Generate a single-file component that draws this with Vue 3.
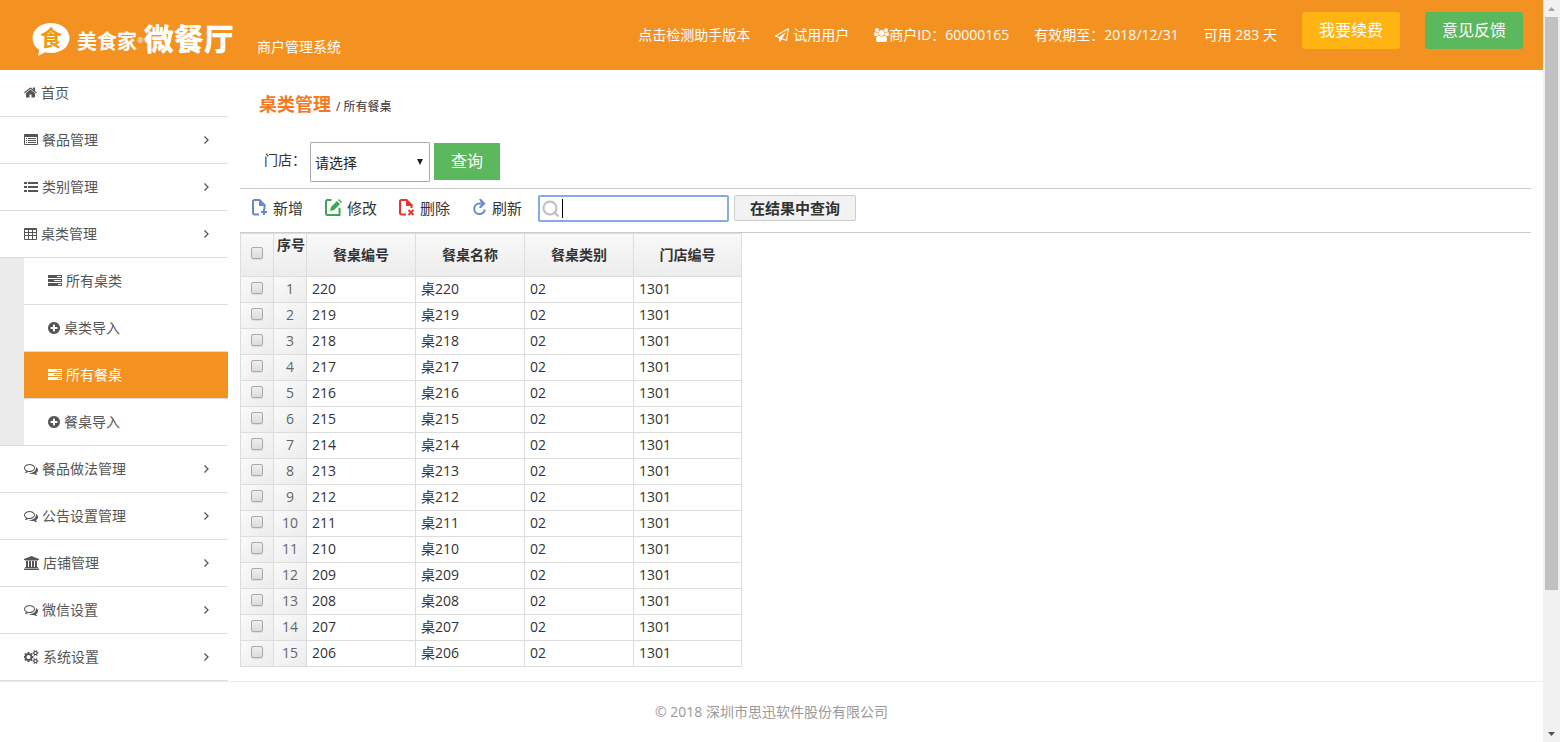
<script setup>
import { ref } from 'vue'

const icons = {
  home: { w: 13, box: '64 128 1664 1664', d: 'M1472 992v480q0 26-19 45t-45 19h-384v-384h-256v384h-384q-26 0-45-19t-19-45v-480q0-1 .5-3t.5-3l575-474 575 474q1 2 1 6zm223-69l-62 74q-8 9-21 11h-3q-13 0-21-7l-692-577-692 577q-12 8-24 7-13-2-21-11l-62-74q-8-10-7-23.5t11-21.5l719-599q32-26 76-26t76 26l244 204v-195q0-14 9-23t23-9h192q14 0 23 9t9 23v408l219 182q10 8 11 21.5t-7 23.5z' },
  listAlt: { w: 14, box: '0 0 14 14', d: 'M1 1h12a1 1 0 0 1 1 1v9a1 1 0 0 1-1 1H1a1 1 0 0 1-1-1V2a1 1 0 0 1 1-1zM1 4v7h12V4zM2 5h1v1H2zM4 5h8v1H4zM2 7h1v1H2zM4 7h8v1H4zM2 9h1v1H2zM4 9h8v1H4z' },
  list: { w: 14, box: '0 0 14 14', d: 'M0 2h3v2H0zM4 2h10v2H4zM0 6h3v2H0zM4 6h10v2H4zM0 10h3v2H0zM4 10h10v2H4z' },
  table: { w: 13, box: '0 0 13 14', d: 'M1 1h11a1 1 0 0 1 1 1v10a1 1 0 0 1-1 1H1a1 1 0 0 1-1-1V2a1 1 0 0 1 1-1zM1 3v2h3V3zM5 3v2h3V3zM9 3v2h3V3zM1 6v2h3V6zM5 6v2h3V6zM9 6v2h3V6zM1 9v3h3V9zM5 9v3h3V9zM9 9v3h3V9z' },
  tasks: { w: 14, box: '0 0 14 14', d: 'M0 1h14v3H0zM9 2v1h4V2zM0 5h14v3H0zM6 6v1h7V6zM0 9h14v3H0zM10 10v1h3v-1z' },
  plus: { w: 12, box: '128 128 1536 1536', d: 'M1344 960v-128q0-26-19-45t-45-19h-256v-256q0-26-19-45t-45-19h-128q-26 0-45 19t-19 45v256h-256q-26 0-45 19t-19 45v128q0 26 19 45t45 19h256v256q0 26 19 45t45 19h128q26 0 45-19t19-45v-256h256q26 0 45-19t19-45zm320-64q0 209-103 385.5t-279.5 279.5-385.5 103-385.5-103-279.5-279.5-103-385.5 103-385.5 279.5-279.5 385.5-103 385.5 103 279.5 279.5 103 385.5z' },
  comments: { w: 14, box: '0 0 1792 1792', d: 'M704 384q-153 0-286 52t-211.5 141-78.5 191q0 82 53 158t149 132l97 56-35 84q34-20 62-39l44-31 53 10q78 14 153 14 153 0 286-52t211.5-141 78.5-191-78.5-191-211.5-141-286-52zm0-128q191 0 353.5 68.5t256.5 186.5 94 257-94 257-256.5 186.5-353.5 68.5q-86 0-176-16-124 88-278 128-36 9-86 16h-3q-11 0-20.5-8t-11.5-21q-1-3-1-6.5t.5-6.5 2-6l2.5-5 3.5-5.5 4-5 4.5-5 4-4.5q5-6 23-25t26-29.5 22.5-29 25-38.5 20.5-44q-124-72-195-177t-71-224q0-139 94-257t256.5-186.5 353.5-68.5zm822 1169q10 24 20.5 44t25 38.5 22.5 29 26 29.5 23 25q1 1 4 4.5t4.5 5 4 5 3.5 5.5l2.5 5 2 6 .5 6.5-1 6.5q-3 14-13 22t-22 7q-50-7-86-16-154-40-278-128-90 16-176 16-271 0-472-132 58 4 88 4 161 0 309-45t264-129q125-92 192-212t67-254q0-77-23-152 129 71 204 178t75 230q0 120-71 224.5t-195 176.5z' },
  bank: { w: 15, box: '0 0 1920 1792', d: 'M960 0l960 384v128h-128q0 26-20.5 45t-48.5 19h-1526q-28 0-48.5-19t-20.5-45h-128v-128zm-704 640h256v768h128v-768h256v768h128v-768h256v768h128v-768h256v768h59q28 0 48.5 19t20.5 45v64h-1664v-64q0-26 20.5-45t48.5-19h59v-768zm1595 960q28 0 48.5 19t20.5 45v128h-1920v-128q0-26 20.5-45t48.5-19h1782z' },
  cogs: { w: 15, box: '0 0 1920 1792', d: 'M832 896q0-106-75-181t-181-75-181 75-75 181 75 181 181 75 181-75 75-181zm768 512q0-52-38-90t-90-38-90 38-38 90q0 53 37.5 90.5t90.5 37.5 90.5-37.5 37.5-90.5zm0-1024q0-52-38-90t-90-38-90 38-38 90q0 53 37.5 90.5t90.5 37.5 90.5-37.5 37.5-90.5zm-384 421v185q0 10-7 19.5t-16 10.5l-155 24q-11 35-32 76 34 48 90 115 7 11 7 20 0 12-7 19-23 30-82.5 89.5t-78.5 59.5q-11 0-21-7l-115-90q-37 19-77 31-11 108-23 155-7 24-30 24h-186q-11 0-20-7.5t-10-17.5l-23-153q-34-10-75-31l-118 89q-7 7-20 7-11 0-21-8-144-133-144-160 0-9 7-19 10-14 41-53t47-61q-23-44-35-82l-152-24q-10-1-17-9.5t-7-19.5v-185q0-10 7-19.5t16-10.5l155-24q11-35 32-76-34-48-90-115-7-11-7-20 0-12 7-20 22-30 82-89t79-59q11 0 21 7l115 90q34-18 77-32 11-108 23-154 7-24 30-24h186q11 0 20 7.5t10 17.5l23 153q34 10 75 31l118-89q8-7 20-7 11 0 21 8 144 133 144 160 0 8-7 19-12 16-42 54t-45 60q23 48 34 82l152 23q10 2 17 10.5t7 19.5zm640 533v140q0 16-149 31-12 27-30 52 51 113 51 138 0 4-4 7-122 71-124 71-8 0-46-47t-52-68q-20 2-30 2t-30-2q-14 21-52 68t-46 47q-2 0-124-71-4-3-4-7 0-25 51-138-18-25-30-52-149-15-149-31v-140q0-16 149-31 13-29 30-52-51-113-51-138 0-4 4-7 4-2 35-20t59-34 30-16q8 0 46 46.5t52 67.5q20-2 30-2t30 2q51-71 92-112l6-2q4 0 124 70 4 3 4 7 0 25-51 138 17 23 30 52 149 15 149 31zm0-1024v140q0 16-149 31-12 27-30 52 51 113 51 138 0 4-4 7-122 71-124 71-8 0-46-47t-52-68q-20 2-30 2t-30-2q-14 21-52 68t-46 47q-2 0-124-71-4-3-4-7 0-25 51-138-18-25-30-52-149-15-149-31v-140q0-16 149-31 13-29 30-52-51-113-51-138 0-4 4-7 4-2 35-20t59-34 30-16q8 0 46 46.5t52 67.5q20-2 30-2t30 2q51-71 92-112l6-2q4 0 124 70 4 3 4 7 0 25-51 138 17 23 30 52 149 15 149 31z' }
}

const menu = [
  { label: '首页', icon: 'home' },
  { label: '餐品管理', icon: 'listAlt', more: true },
  { label: '类别管理', icon: 'list', more: true },
  {
    label: '桌类管理', icon: 'table', more: true,
    children: [
      { label: '所有桌类', icon: 'tasks' },
      { label: '桌类导入', icon: 'plus' },
      { label: '所有餐桌', icon: 'tasks', active: true },
      { label: '餐桌导入', icon: 'plus' }
    ]
  },
  { label: '餐品做法管理', icon: 'comments', more: true },
  { label: '公告设置管理', icon: 'comments', more: true },
  { label: '店铺管理', icon: 'bank', more: true },
  { label: '微信设置', icon: 'comments', more: true },
  { label: '系统设置', icon: 'cogs', more: true }
]

const rows = Array.from({ length: 15 }, (_, i) => ({
  index: i + 1,
  code: String(220 - i),
  name: '桌' + (220 - i),
  type: '02',
  shop: '1301'
}))

const shop = ref('')
const keyword = ref('')
</script>

<template>
  <div class="window">
    <div class="page">
      <header class="top">
        <div class="logo">
          <div class="bubble">
            <svg width="38" height="34" viewBox="0 0 38 34" aria-hidden="true"><path fill="#fff" d="M19 0C29.500 0 37.500 6.500 37.500 15S29.500 30 19 30c-2 0-4-.2-5.800-.7L6 33l1.300-6.300C3 24 .5 20 .5 15 .5 6.500 8.500 0 19 0z" /></svg>
            <span class="bubble-text">食</span>
          </div>
          <span class="brand">美食家</span><span class="reg">®</span><strong class="product">微餐厅</strong>
        </div>
        <span class="system">商户管理系统</span>
        <nav class="top-nav">
          <a href="#" class="top-item">点击检测助手版本</a>
          <a href="#" class="top-item spaced">
            <svg width="14" height="14" viewBox="0 0 1792 1792" fill="currentColor" aria-hidden="true"><path d="M1764 11q33 24 27 64l-256 1536q-5 29-32 45-14 8-31 8-11 0-24-5l-527-215-298 327q-18 21-47 21-14 0-23-4-19-7-30-23.500t-11-36.500v-452l-472-193q-37-14-40-55-3-39 32-59l1664-960q35-21 68 2zm-342 1499l221-1323-1434 827 336 137 863-639-478 797z" /></svg>试用用户
          </a>
          <span class="top-item">
            <svg width="15" height="14" viewBox="0 0 1920 1792" fill="currentColor" aria-hidden="true"><path d="M593 896q-162 5-265 128h-134q-82 0-138-40.500t-56-118.500q0-353 124-353 6 0 43.500 21t97.500 42.500 119 21.500q67 0 133-23-5 37-5 66 0 139 81 256zm1071 637q0 120-73 189.500t-194 69.500h-874q-121 0-194-69.500t-73-189.500q0-53 3.500-103.500t14-109 26.500-108.500 43-97.500 62-81 85.500-53.500 111.500-20q10 0 43 21.500t73 48 107 48 135 21.500 135-21.500 107-48 73-48 43-21.500q61 0 111.500 20t85.500 53.500 62 81 43 97.500 26.500 108.500 14 109 3.500 103.500zm-1024-1277q0 106-75 181t-181 75-181-75-75-181 75-181 181-75 181 75 75 181zm704 384q0 159-112.500 271.500t-271.500 112.500-271.500-112.500-112.500-271.500 112.500-271.500 271.500-112.500 271.500 112.500 112.500 271.500zm576 225q0 78-56 118.500t-138 40.500h-134q-103-123-265-128 81-117 81-256 0-29-5-66 66 23 133 23 59 0 119-21.500t97.500-42.500 43.500-21q124 0 124 353zm-128-609q0 106-75 181t-181 75-181-75-75-181 75-181 181-75 181 75 75 181z" /></svg>商户ID：60000165
          </span>
          <span class="top-item">有效期至：2018/12/31</span>
          <span class="top-item">可用 283 天</span>
          <button type="button" class="btn amber">我要续费</button>
          <button type="button" class="btn green">意见反馈</button>
        </nav>
      </header>

      <div class="body">
        <nav class="side">
          <template v-for="item in menu" :key="item.label">
            <a href="#" class="side-item">
              <svg :width="icons[item.icon].w" height="14" :viewBox="icons[item.icon].box" fill="currentColor" fill-rule="evenodd" aria-hidden="true"><path :d="icons[item.icon].d" /></svg>
              <span class="side-label">{{ item.label }}</span>
              <svg v-if="item.more" width="6" height="8" viewBox="0 0 6 8" fill="none" stroke="currentColor" stroke-width="1.3" aria-hidden="true"><path d="M1.500 .5L5 4 1.500 7.500" /></svg>
            </a>
            <div v-if="item.children" class="sub">
              <a v-for="child in item.children" :key="child.label" href="#" class="side-item child" :class="{ active: child.active }">
                <svg :width="icons[child.icon].w" height="14" :viewBox="icons[child.icon].box" fill="currentColor" fill-rule="evenodd" aria-hidden="true"><path :d="icons[child.icon].d" /></svg>
                <span class="side-label">{{ child.label }}</span>
              </a>
            </div>
          </template>
        </nav>

        <main class="main">
          <div class="crumb"><h1>桌类管理</h1><span>/&nbsp;所有餐桌</span></div>

          <form class="filter" @submit.prevent>
            <label for="shop">门店：</label>
            <div class="select-box">
              <select id="shop" v-model="shop"><option value="">请选择</option></select>
              <svg width="6" height="6" viewBox="0 0 6 6" aria-hidden="true"><path d="M0 0h6L3 6z" fill="#222" /></svg>
            </div>
            <button type="submit" class="btn green query">查询</button>
          </form>

          <div class="tools">
            <button type="button" class="tool">
              <svg width="16" height="17" viewBox="0 0 16 17" aria-hidden="true"><path d="M7 15.500H2.500A1.500 1.500 0 0 1 1 14V2.500A1.500 1.500 0 0 1 2.500 1H8M12.500 6v4" fill="none" stroke="#6687d2" stroke-width="2" /><path d="M7 0h1l5.500 5.500V7H7zM11 10h2v2h2v2h-2v2h-2v-2H9v-2h2z" fill="#6687d2" /></svg>新增
            </button>
            <button type="button" class="tool">
              <svg width="17" height="17" viewBox="0 0 17 17" aria-hidden="true"><path d="M6.500 1H2.500A1.500 1.500 0 0 0 1 2.500v12A1.500 1.500 0 0 0 2.500 16h12V9" fill="none" stroke="#3ea650" stroke-width="2" /><path d="M5 12l1-4 6-6 3 3-6 6zM13 1l1-1 3 3-1 1z" fill="#3ea650" /></svg>修改
            </button>
            <button type="button" class="tool">
              <svg width="16" height="17" viewBox="0 0 16 17" aria-hidden="true"><path d="M7 15.500H2.500A1.500 1.500 0 0 1 1 14V2.500A1.500 1.500 0 0 1 2.500 1H8M12.500 6v3" fill="none" stroke="#e63434" stroke-width="2" /><path d="M7 0h1l5.500 5.500V7H7z" fill="#e63434" /><path d="M9.500 11l5 5m0-5l-5 5" stroke="#e63434" stroke-width="2" /></svg>删除
            </button>
            <button type="button" class="tool">
              <svg width="15" height="17" viewBox="0 0 15 17" aria-hidden="true"><path d="M9 4.500H7.500a5.300 5.300 0 1 0 5.300 6" fill="none" stroke="#6687d2" stroke-width="2" /><path d="M7 0h2l4.500 4.500L9 9H7l2.500-4.500z" fill="#6687d2" /></svg>刷新
            </button>
            <div class="search">
              <svg width="18" height="18" viewBox="0 0 18 18" fill="none" stroke="#bbb" aria-hidden="true"><circle cx="8" cy="8" r="6.500" stroke-width="2" /><path d="M12.500 12.500L16.500 16.500" stroke-width="2" /></svg>
              <input v-model="keyword" type="text" aria-label="在结果中查询">
              <i class="caret"></i>
            </div>
            <button type="button" class="search-btn">在结果中查询</button>
          </div>

          <table class="grid">
            <colgroup>
              <col class="c-narrow"><col class="c-narrow"><col class="c-wide"><col class="c-wide"><col class="c-wide"><col class="c-last">
            </colgroup>
            <thead>
              <tr>
                <th class="tick"><input type="checkbox" aria-label="全选"></th>
                <th class="no">序号</th>
                <th>餐桌编号</th>
                <th>餐桌名称</th>
                <th>餐桌类别</th>
                <th>门店编号</th>
              </tr>
            </thead>
            <tbody>
              <tr v-for="row in rows" :key="row.index">
                <td class="tick"><input type="checkbox" :aria-label="'选择 ' + row.name"></td>
                <td class="no">{{ row.index }}</td>
                <td>{{ row.code }}</td>
                <td>{{ row.name }}</td>
                <td>{{ row.type }}</td>
                <td>{{ row.shop }}</td>
              </tr>
            </tbody>
          </table>
        </main>
      </div>

      <footer class="foot">© 2018 深圳市思迅软件股份有限公司</footer>
    </div>

    <div class="scrollbar" aria-hidden="true">
      <svg width="17" height="17" viewBox="0 0 17 17"><path d="M5 11h7L8.500 7z" fill="#a3a3a3" /></svg>
      <div class="track"><div class="thumb"></div></div>
      <svg width="17" height="17" viewBox="0 0 17 17"><path d="M5 7h7l-3.500 4z" fill="#505050" /></svg>
    </div>
  </div>
</template>

<style>
body {
  margin: 0;
  background: #fff;
}
</style>

<style scoped>
* {
  box-sizing: border-box;
}
.window {
  display: flex;
  min-height: 100vh;
  color: #333;
  font-family: "Open Sans", "Noto Sans CJK SC", sans-serif;
  font-size: 14px;
  line-height: 20px;
}
button, input, select {
  font-family: inherit;
}
a {
  color: inherit;
  text-decoration: none;
}
svg {
  flex: none;
}
.page {
  flex: 1;
  min-width: 0;
}

.top {
  display: flex;
  height: 70px;
  padding: 0 20px 0 32px;
  background: #f39121;
  color: #fff;
  white-space: nowrap;
}
.logo {
  display: flex;
  align-items: center;
  width: 200px;
  padding-top: 10px;
}
.bubble {
  position: relative;
  width: 38px;
  height: 34px;
  margin-right: 7px;
}
.bubble-text {
  position: absolute;
  inset: 0;
  color: #f09a10;
  font-size: 22px;
  font-weight: 700;
  line-height: 28px;
  text-align: center;
}
.brand {
  font-size: 20px;
  font-weight: 700;
  line-height: 24px;
  padding-top: 4px;
}
.reg {
  width: 7px;
  font-size: 8px;
  line-height: 8px;
}
.product {
  font-size: 30px;
  font-weight: 900;
  line-height: 32px;
  padding-bottom: 2px;
}
.system {
  margin-left: 25px;
  padding-top: 37px;
}
.top-nav {
  display: flex;
  align-items: flex-start;
  gap: 25px;
  margin-left: auto;
  padding-top: 12px;
}
.top-item {
  display: flex;
  align-items: center;
  line-height: 46px;
}
.spaced {
  gap: 4px;
}
.btn {
  height: 37px;
  padding: 0 17px;
  border: 0;
  border-radius: 3px;
  color: #fff;
  font-size: 16px;
  line-height: 37px;
}
.amber {
  background: #ffb414;
}
.green {
  background: #5cb85c;
}

.body {
  display: flex;
}
.side {
  width: 228px;
  flex: none;
  color: #555;
}
.side-item {
  display: flex;
  align-items: center;
  gap: 4px;
  height: 47px;
  padding: 0 19px 0 24px;
  border-bottom: 1px solid #ddd;
}
.side-label {
  flex: 1;
}
.sub {
  padding-left: 24px;
  background: #ebebeb;
  border-bottom: 1px solid #ddd;
}
.child {
  background: #fff;
}
.child:last-child {
  height: 46px;
  border-bottom: 0;
}
.active {
  background: #f39121;
  color: #fff;
}

.main {
  flex: 1;
  min-width: 0;
  padding: 20px 12px 0;
}
.crumb {
  display: flex;
  align-items: baseline;
  gap: 5px;
  height: 52px;
  padding-left: 19px;
  font-size: 12px;
  line-height: 28px;
}
h1 {
  margin: 0;
  color: #f47920;
  font-size: 18px;
  line-height: 28px;
}
.filter {
  display: flex;
  align-items: flex-start;
  gap: 4px;
  height: 47px;
  padding-left: 24px;
  border-bottom: 1px solid #ccc;
}
.filter label {
  width: 42px;
  line-height: 36px;
}
.select-box {
  position: relative;
  width: 120px;
}
.select-box svg {
  position: absolute;
  right: 7px;
  top: 17px;
}
select {
  display: block;
  width: 100%;
  height: 40px;
  padding: 0 4px;
  appearance: none;
  border: 1px solid #a9a9a9;
  border-radius: 1px;
  background: #fff;
  color: #222;
  font-size: 14px;
}
.query {
  margin-top: 1px;
  border-radius: 0;
}
.tools {
  display: flex;
  align-items: flex-start;
  height: 44px;
  padding: 6px 0 0 12px;
  border-bottom: 1px solid #ccc;
}
.tool {
  display: flex;
  align-items: center;
  gap: 5px;
  height: 25px;
  margin-right: 22px;
  padding: 0;
  border: 0;
  background: none;
  color: #333;
  font-size: 15px;
}
.search {
  position: relative;
  display: flex;
  width: 191px;
  margin-left: -6px;
  margin-right: 5px;
}
.search svg {
  position: absolute;
  left: 4px;
  top: 5px;
}
.search input {
  width: 100%;
  height: 27px;
  padding: 0 6px 0 24px;
  border: 2px solid #86aae8;
  border-radius: 2px;
  outline: 0;
  font-size: 14px;
}
.caret {
  position: absolute;
  left: 24px;
  top: 4px;
  width: 1px;
  height: 19px;
  background: #000;
}
.search-btn {
  width: 122px;
  height: 26px;
  padding: 0;
  border: 1px solid #ccc;
  border-radius: 2px;
  background: #f2f2f2;
  color: #333;
  font-size: 15px;
  font-weight: 700;
  line-height: 24px;
}

.grid {
  width: 502px;
  table-layout: fixed;
  border-collapse: separate;
  border-spacing: 0;
  border: solid #ddd;
  border-width: 1px 0 0 1px;
  margin-bottom: 14px;
}
.c-narrow {
  width: 33px;
}
.c-wide {
  width: 109px;
}
.c-last {
  width: 108px;
}
th, td {
  border: solid #ddd;
  border-width: 0 1px 1px 0;
}
th {
  height: 43px;
  padding: 0;
  background: linear-gradient(#f9f9f9, #ececec);
}
td {
  height: 26px;
  padding: 0 5px 2px;
  line-height: 23px;
}
td.tick, td.no {
  padding-left: 0;
  padding-right: 0;
  background: linear-gradient(to bottom right, #fafafa, #ececec);
  color: #666;
  text-align: center;
}
th.no {
  padding: 1px 0 0 2px;
  vertical-align: top;
}
.tick input {
  display: block;
  width: 12px;
  height: 12px;
  margin: 0 auto 1px;
  appearance: none;
  border: 1px solid #aaa;
  border-radius: 2px;
  background: linear-gradient(#eee, #dcdcdc);
  box-shadow: 0 1px 1px #ddd;
}
th.tick input {
  margin-bottom: 5px;
}

.foot {
  padding: 20px;
  border-top: 1px solid #ebebeb;
  color: #999;
  text-align: center;
}

.scrollbar {
  display: flex;
  flex-direction: column;
  width: 17px;
  background: #f1f1f1;
}
.track {
  flex: 1;
  padding: 0 2px;
}
.thumb {
  height: 81%;
  background: #c1c1c1;
}
</style>
